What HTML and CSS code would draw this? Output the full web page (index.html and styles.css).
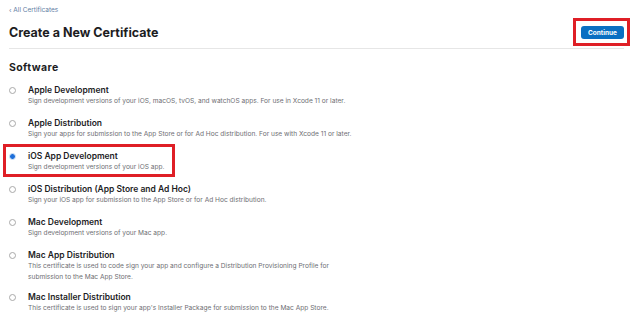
FILE: index.html
```html
<!DOCTYPE html>
<html lang="en">
<head>
    <meta charset="UTF-8">
    <meta name="viewport" content="width=device-width, initial-scale=1.0">
    <title>Create a New Certificate</title>
    <link rel="stylesheet" href="styles.css">
</head>
<body>
    <div class="page">
        <a class="back-link" href="#">&lsaquo; All Certificates</a>

        <div class="title-row">
            <h1>Create a New Certificate</h1>
            <span class="highlight highlight-btn">
                <button class="btn">Continue</button>
            </span>
        </div>

        <div class="divider"></div>

        <h2>Software</h2>

        <div class="options">
            <label class="option">
                <span class="radio"></span>
                <span class="option-text">
                    <span class="option-title">Apple Development</span>
                    <span class="option-desc">Sign development versions of your iOS, macOS, tvOS, and watchOS apps. For use in Xcode 11 or later.</span>
                </span>
            </label>
            <label class="option">
                <span class="radio"></span>
                <span class="option-text">
                    <span class="option-title">Apple Distribution</span>
                    <span class="option-desc">Sign your apps for submission to the App Store or for Ad Hoc distribution. For use with Xcode 11 or later.</span>
                </span>
            </label>
            <label class="option selected">
                <span class="radio checked"></span>
                <span class="option-text">
                    <span class="option-title">iOS App Development</span>
                    <span class="option-desc">Sign development versions of your iOS app.</span>
                </span>
            </label>
            <label class="option">
                <span class="radio"></span>
                <span class="option-text">
                    <span class="option-title">iOS Distribution (App Store and Ad Hoc)</span>
                    <span class="option-desc">Sign your iOS app for submission to the App Store or for Ad Hoc distribution.</span>
                </span>
            </label>
            <label class="option">
                <span class="radio"></span>
                <span class="option-text">
                    <span class="option-title">Mac Development</span>
                    <span class="option-desc">Sign development versions of your Mac app.</span>
                </span>
            </label>
            <label class="option">
                <span class="radio"></span>
                <span class="option-text">
                    <span class="option-title">Mac App Distribution</span>
                    <span class="option-desc">This certificate is used to code sign your app and configure a Distribution Provisioning Profile for<br>submission to the Mac App Store.</span>
                </span>
            </label>
            <label class="option">
                <span class="radio"></span>
                <span class="option-text">
                    <span class="option-title">Mac Installer Distribution</span>
                    <span class="option-desc">This certificate is used to sign your app's Installer Package for submission to the Mac App Store.</span>
                </span>
            </label>
        </div>
    </div>
</body>
</html>
```

FILE: styles.css
```css
* {
    box-sizing: border-box;
    margin: 0;
    padding: 0;
}

body {
    font-family: Inter, 'Noto Sans', sans-serif;
    background: #ffffff;
    color: #1d1d1f;
    overflow: hidden;
}

.page {
    padding: 5px 8px 0 9px;
}

.back-link {
    display: block;
    font-size: 6.5px;
    line-height: 10px;
    color: #5f7ea3;
    text-decoration: none;
}

.title-row {
    display: flex;
    justify-content: space-between;
    align-items: center;
    margin-top: 3px;
    height: 28px;
}

h1 {
    font-size: 12.5px;
    font-weight: 700;
    color: #1d1d1f;
}

.highlight {
    border: 3px solid #df1f26;
}

.highlight-btn {
    display: block;
    margin-right: -6px;
    padding: 5px 3px 4px 5px;
}

.btn {
    display: block;
    width: 43px;
    height: 13px;
    border: none;
    border-radius: 3px;
    background: #0a6fc2;
    color: #ffffff;
    font-family: Inter, sans-serif;
    font-size: 6.5px;
    font-weight: 700;
}

.divider {
    margin-top: 2px;
    border-top: 1px solid #e6e6e6;
}

h2 {
    margin-top: 12px;
    font-size: 10.5px;
    line-height: 14px;
    font-weight: 700;
    letter-spacing: 0.4px;
    color: #1d1d1f;
}

.options {
    display: flex;
    flex-direction: column;
    align-items: flex-start;
    margin-top: 3px;
}

.option {
    display: flex;
    margin-left: -6px;
    padding: 4px 7px 1px 3px;
    border: 3px solid transparent;
}

.option:last-child {
    margin-top: -2px;
}

.option.selected {
    border-color: #df1f26;
}

.radio {
    flex: none;
    width: 7px;
    height: 7px;
    margin-top: 2px;
    margin-right: 12px;
    border: 1px solid #a9a9a9;
    border-radius: 50%;
}

.radio.checked {
    border: 1px solid #b9d4f2;
    background: radial-gradient(circle, #1e6fd9 0 2.2px, #b9d4f2 2.8px);
}

.option-text {
    display: flex;
    flex-direction: column;
}

.option-title {
    font-size: 8.5px;
    line-height: 11px;
    font-weight: 600;
    color: #1d1d1f;
}

.option-desc {
    font-size: 6.6px;
    line-height: 11px;
    color: #6e6e73;
}
```
